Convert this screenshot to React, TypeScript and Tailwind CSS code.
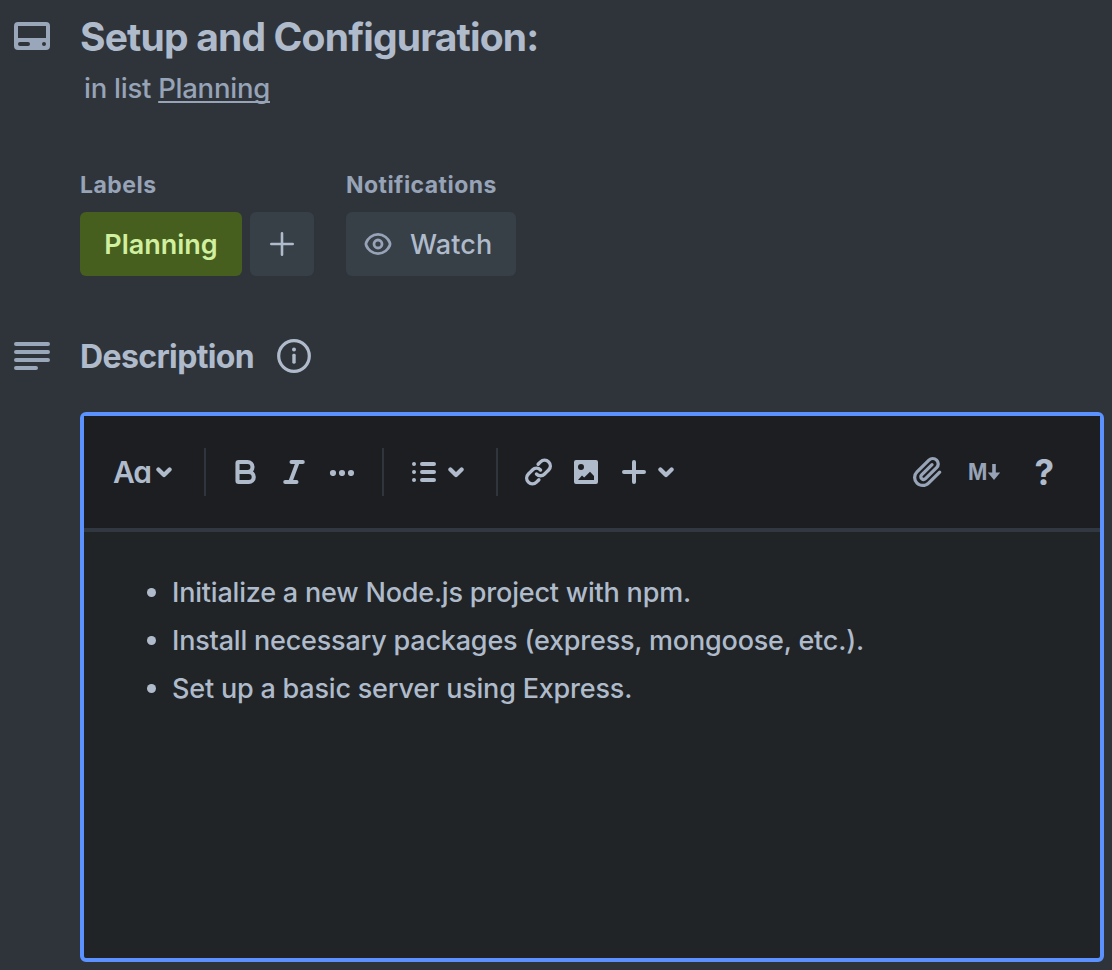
import type { ReactNode } from 'react';
import { Bold, Italic } from 'lucide-react';

function Chevron() {
  return (
    <svg width="16" height="12" viewBox="0 0 16 12" fill="none" stroke="currentColor" strokeWidth="4.2" strokeLinecap="round" strokeLinejoin="round">
      <path d="M2.4 3.4 8 9l5.600-5.600" />
    </svg>
  );
}

function CardIcon() {
  return (
    <svg width="36" height="28" viewBox="0 0 36 28">
      <path
        fill="currentColor"
        fillRule="evenodd"
        d="M4 0h28a4 4 0 0 1 4 4v20a4 4 0 0 1-4 4H4a4 4 0 0 1-4-4V4a4 4 0 0 1 4-4ZM4 4v12h28V4ZM6 20a2 2 0 0 0 0 4h8a2 2 0 0 0 0-4ZM30 20a2 2 0 0 0 0 4a2 2 0 0 0 0-4Z"
      />
    </svg>
  );
}

function LinesIcon() {
  return (
    <svg width="36" height="28" viewBox="0 0 36 28" fill="none" stroke="currentColor" strokeWidth="4" strokeLinecap="round">
      <path d="M2 2h32M2 10h32M2 18h32M2 26h20" />
    </svg>
  );
}

function EyeIcon() {
  return (
    <svg width="28" height="24" viewBox="0 0 28 24" fill="none" stroke="currentColor" strokeWidth="2.8">
      <path d="M14 2.400c6 0 10.200 4.300 11.700 8a4 4 0 0 1 0 3.200c-1.500 3.700-5.700 8-11.700 8s-10.200-4.300-11.700-8a4 4 0 0 1 0-3.200c1.500-3.700 5.700-8 11.700-8Z" />
      <circle cx="14" cy="12" r="4" />
    </svg>
  );
}

function InfoIcon() {
  return (
    <svg width="34" height="34" viewBox="0 0 34 34">
      <circle cx="17" cy="17" r="15.300" fill="none" stroke="currentColor" strokeWidth="3.200" />
      <circle cx="17" cy="10.500" r="2" fill="currentColor" />
      <rect x="15.300" y="14.800" width="3.400" height="9.900" rx="1.400" fill="currentColor" />
    </svg>
  );
}

function ListIcon() {
  return (
    <svg width="24" height="20" viewBox="0 0 24 20" fill="none" stroke="currentColor" strokeWidth="4" strokeLinecap="round">
      <path d="M10 2h12M10 10h12M10 18h12M2 2h.01M2 10h.01M2 18h.01" />
    </svg>
  );
}

function LinkIcon() {
  return (
    <svg width="48" height="48" viewBox="0 0 24 24" fill="currentColor">
      <path d="M12.654 8.764a.858.858 0 01-1.213-1.213l1.214-1.214a3.717 3.717 0 015.257 0 3.714 3.714 0 01.001 5.258l-1.214 1.214-.804.804a3.72 3.72 0 01-5.263.005.858.858 0 011.214-1.214c.781.782 2.05.78 2.836-.005l.804-.803 1.214-1.214a1.998 1.998 0 00-.001-2.831 2 2 0 00-2.83 0l-1.215 1.213zm-.808 6.472a.858.858 0 011.213 1.213l-1.214 1.214a3.717 3.717 0 01-5.257 0 3.714 3.714 0 01-.001-5.258l1.214-1.214.804-.804a3.72 3.72 0 015.263-.005.858.858 0 01-1.214 1.214 2.005 2.005 0 00-2.836.005l-.804.803L7.8 13.618a1.998 1.998 0 00.001 2.831 2 2 0 002.83 0l1.215-1.213z" />
    </svg>
  );
}

function ImageIcon() {
  return (
    <svg width="26" height="24" viewBox="0 0 26 24" fill="currentColor" fillRule="evenodd">
      <path d="M3 0h20a2 2 0 0 1 2 2v20a2 2 0 0 1-2 2H3a2 2 0 0 1-2-2V2a2 2 0 0 1 2-2ZM8 4a3 3 0 0 0 0 6a3 3 0 0 0 0-6ZM5 20h16v-4l-4-4.200-5.800 5.600-2.200-1.800Z" />
    </svg>
  );
}

function AttachIcon() {
  return (
    <svg width="40" height="40" viewBox="0 0 24 24" fill="currentColor">
      <path d="M11.643 17.965c-1.53 1.495-4.016 1.496-5.542.004a3.773 3.773 0 01.002-5.412l7.147-6.985a2.316 2.316 0 013.233-.003c.893.873.895 2.282.004 3.153l-6.703 6.55a.653.653 0 01-.914-.008.62.62 0 010-.902l6.229-6.087a.941.941 0 000-1.353.995.995 0 00-1.384 0l-6.23 6.087a2.502 2.502 0 000 3.607 2.643 2.643 0 003.683.009l6.703-6.55a4.074 4.074 0 00-.003-5.859 4.306 4.306 0 00-6.002.003l-7.148 6.985a5.655 5.655 0 00-.001 8.118c2.29 2.237 6.015 2.238 8.31-.005l6.686-6.534a.941.941 0 000-1.353.995.995 0 00-1.384 0l-6.686 6.535z" />
    </svg>
  );
}

function Plus({ thin = false }: { thin?: boolean }) {
  return (
    <svg width="24" height="24" viewBox="0 0 24 24" fill="none" stroke="currentColor" strokeWidth={thin ? 2.6 : 4} strokeLinecap="round">
      <path d={thin ? 'M12 1.300v21.400M1.300 12h21.400' : 'M12 2v20M2 12h20'} />
    </svg>
  );
}

function Divider() {
  return <div className="h-12 w-0.5 shrink-0 bg-[#2f343d]" />;
}

function Item({ children }: { children: ReactNode }) {
  return (
    <li className="flex h-12 items-center">
      <span className="mr-[15px] size-[9px] rounded-full bg-[#afbbcb]" />
      <span className="pt-0.5 pl-px whitespace-nowrap">{children}</span>
    </li>
  );
}

export default function App() {
  return (
    <main className="h-[970px] w-[1112px] overflow-hidden bg-[#2f343b] font-[Inter,sans-serif] font-[450] text-[#afbbcb]">
      <header className="flex h-[172px] pl-3.5">
        <div className="w-[66px] shrink-0 pt-[22px] text-[#9aa6b9]">
          <CardIcon />
        </div>
        <div className="pt-[13px]">
          <h1 className="text-[39px] leading-[48px] font-bold tracking-[-0.83px] whitespace-nowrap">Setup and Configuration:</h1>
          <p className="pt-[9px] pl-1 text-[27.5px] leading-9 tracking-[-0.25px] text-[#97a3b6]">
            in list <span className="underline decoration-2 underline-offset-[3px] [text-decoration-skip-ink:none]">Planning</span>
          </p>
        </div>
      </header>

      <section className="flex h-[164px] gap-8 pl-20">
        <div>
          <h3 className="h-10 text-[23px] leading-[26px] font-bold tracking-[0.5px] text-[#97a3b6]">Labels</h3>
          <div className="flex gap-2">
            <div className="flex h-16 w-[162px] items-center justify-center rounded-md bg-[#465f1e] pt-0.5 text-[27px] font-semibold text-[#d0ef9f]">Planning</div>
            <button className="flex size-16 items-center justify-center rounded-md bg-[#373f47]">
              <Plus thin />
            </button>
          </div>
        </div>
        <div>
          <h3 className="h-10 text-[23px] leading-[26px] font-bold tracking-[0.45px] text-[#97a3b6]">Notifications</h3>
          <button className="flex h-16 w-[170px] items-center rounded-md bg-[#373f47] pl-[18px] text-[27px]">
            <span className="mr-[18px] text-[#97a3b6]">
              <EyeIcon />
            </span>
            <span className="pt-0.5 tracking-[0.1px]">Watch</span>
          </button>
        </div>
      </section>

      <section className="flex h-[76px] pl-3.5">
        <div className="w-[66px] shrink-0 pt-1.5 text-[#9aa6b9]">
          <LinesIcon />
        </div>
        <h2 className="w-[197px] pt-px text-[32px] leading-10 font-bold tracking-[-0.62px]">Description</h2>
        <div className="pt-[3px]">
          <InfoIcon />
        </div>
      </section>

      <section className="ml-20 flex h-[550px] w-[1024px] flex-col rounded-md border-4 border-[#5b92ff] bg-[#202426]">
        <div className="flex h-[116px] shrink-0 items-center border-b-4 border-[#323841] bg-[#1d1e22]">
          <div className="flex w-[120px] shrink-0 items-center pl-[29px]">
            <span className="-mt-px w-[43px] text-[30px] leading-none font-semibold tracking-[-1px] [font-feature-settings:'cv11']">Aa</span>
            <Chevron />
          </div>
          <Divider />
          <div className="flex w-[176px] shrink-0 items-center pl-[24px]">
            <Bold size={30} strokeWidth={3.3} />
            <Italic size={30} strokeWidth={3.2} className="ml-[19px]" />
            <svg width="26" height="8" viewBox="0 0 26 8" fill="currentColor" className="ml-[20px]">
              <circle cx="4" cy="5" r="3.100" />
              <circle cx="13" cy="5" r="3.100" />
              <circle cx="22" cy="5" r="3.100" />
            </svg>
          </div>
          <Divider />
          <div className="flex w-[112px] shrink-0 items-center gap-[12px] pl-7">
            <ListIcon />
            <Chevron />
          </div>
          <Divider />
          <div className="flex shrink-0 items-center pl-4">
            <LinkIcon />
            <span className="ml-[11px]">
              <ImageIcon />
            </span>
            <span className="mr-3 ml-[23px]">
              <Plus />
            </span>
            <Chevron />
          </div>
          <div className="ml-auto flex items-center pr-[46px] text-[#97a3b6]">
            <AttachIcon />
            <span className="ml-[20px] w-[19px] origin-left scale-x-90 text-[23px] leading-none font-bold">M</span>
            <svg width="14" height="18" viewBox="0 0 14 18" fill="currentColor">
              <path d="M5.200 1h3.600v8.500h4.400L7 17 .8 9.500h4.400Z" />
            </svg>
            <span className="ml-[33px] text-[35px] leading-none font-bold text-[#afbbcb]">?</span>
          </div>
        </div>
        <ul className="flex flex-col pt-9 pl-[63px] text-[27px] tracking-[-0.2px]">
          <Item>Initialize a new Node.js project with npm.</Item>
          <Item>Install necessary packages (express, mongoose, etc.).</Item>
          <Item>Set up a basic server using Express.</Item>
        </ul>
      </section>
    </main>
  );
}
